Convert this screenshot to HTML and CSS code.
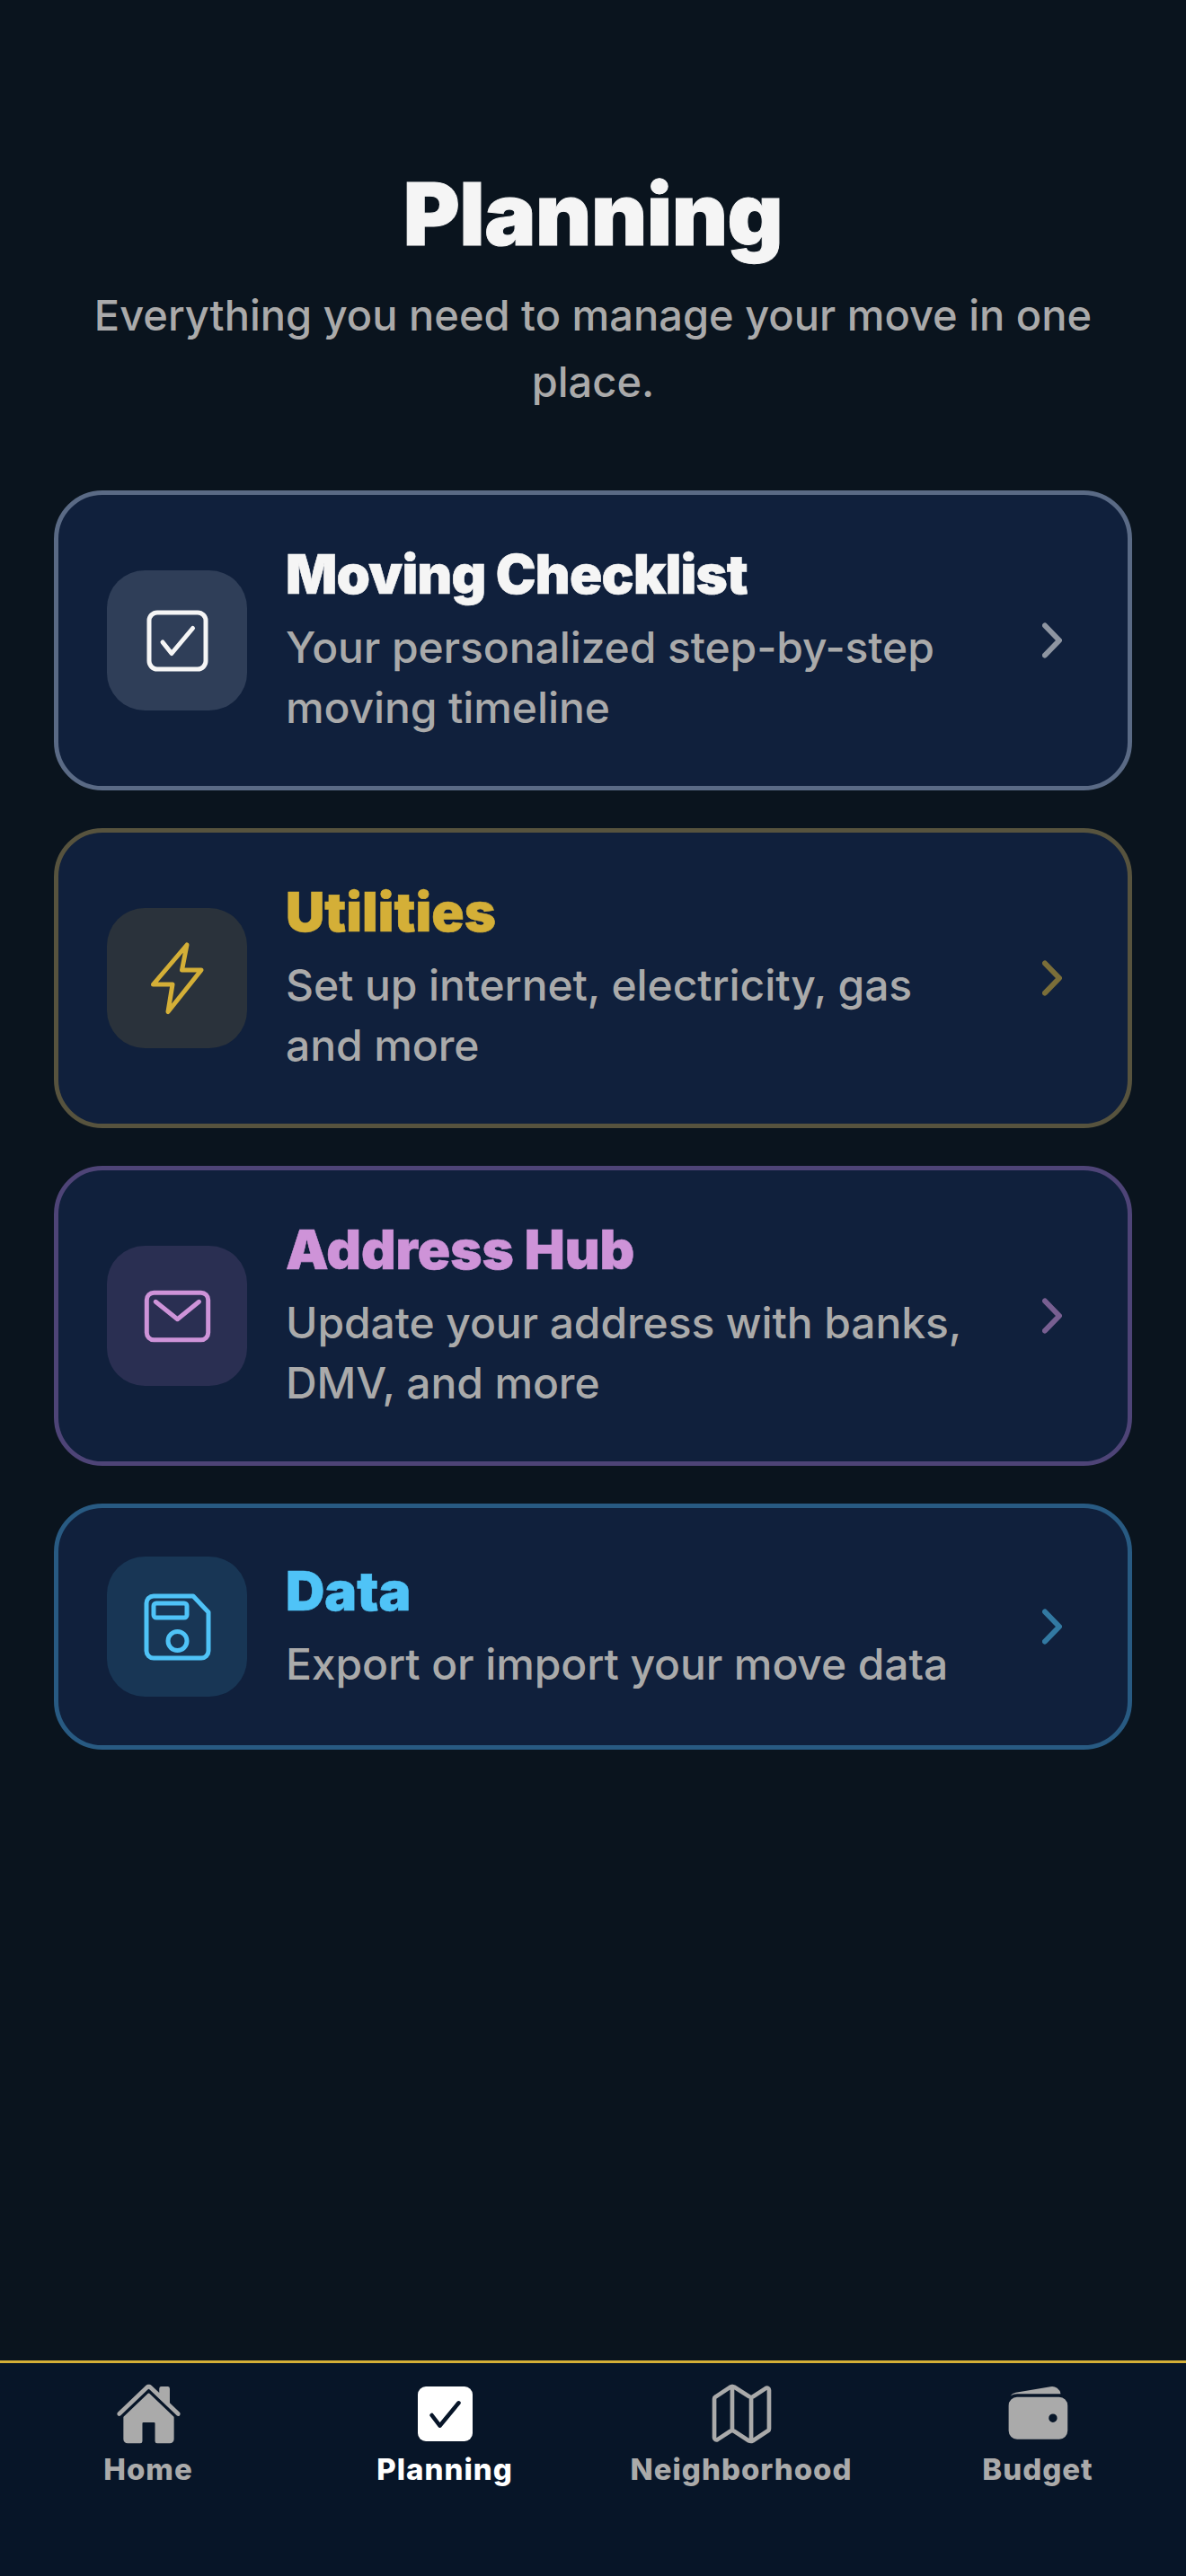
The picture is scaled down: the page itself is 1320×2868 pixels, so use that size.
FILE: index.html
```html
<!DOCTYPE html>
<html lang="en">
<head>
    <meta charset="UTF-8">
    <meta name="viewport" content="width=device-width, initial-scale=1.0">
    <title>Planning</title>
    <link rel="stylesheet" href="styles.css">
</head>
<body>
    <div class="screen">
        <main class="content">
            <h1>Planning</h1>
            <p class="intro">Everything you need to manage your move in one place.</p>

            <div class="cards">
                <div class="card card-checklist">
                    <div class="card-icon">
                        <svg viewBox="0 0 81 81"><rect x="9" y="9" width="63" height="63" rx="9"/><path d="M24 42l10 12.500 23.500-28"/></svg>
                    </div>
                    <div class="card-text">
                        <h2>Moving Checklist</h2>
                        <p>Your personalized step-by-step moving timeline</p>
                    </div>
                    <svg class="chevron" viewBox="0 0 60 60"><path d="M22 13.500L38 30 22 46.500"/></svg>
                </div>

                <div class="card card-utilities">
                    <div class="card-icon">
                        <svg viewBox="0 0 81 81"><path d="M51 3L45.500 31H67L30 77.500 35 47H13.500z"/></svg>
                    </div>
                    <div class="card-text">
                        <h2>Utilities</h2>
                        <p>Set up internet, electricity, gas and more</p>
                    </div>
                    <svg class="chevron" viewBox="0 0 60 60"><path d="M22 13.500L38 30 22 46.500"/></svg>
                </div>

                <div class="card card-address">
                    <div class="card-icon">
                        <svg viewBox="0 0 81 81"><rect x="6.300" y="14.200" width="68.400" height="52.600" rx="8"/><path d="M16.200 24.300L40.500 43.700 64.500 24.300"/></svg>
                    </div>
                    <div class="card-text">
                        <h2>Address Hub</h2>
                        <p>Update your address with banks, DMV, and more</p>
                    </div>
                    <svg class="chevron" viewBox="0 0 60 60"><path d="M22 13.500L38 30 22 46.500"/></svg>
                </div>

                <div class="card card-data">
                    <div class="card-icon">
                        <svg viewBox="0 0 81 81"><path d="M14 6H58L75 24V67a8 8 0 0 1-8 8H14a8 8 0 0 1-8-8V14a8 8 0 0 1 8-8z"/><rect x="14" y="14" width="37" height="16" rx="3"/><circle cx="40.500" cy="56" r="10.500"/></svg>
                    </div>
                    <div class="card-text">
                        <h2>Data</h2>
                        <p>Export or import your move data</p>
                    </div>
                    <svg class="chevron" viewBox="0 0 60 60"><path d="M22 13.500L38 30 22 46.500"/></svg>
                </div>
            </div>
        </main>

        <nav class="tabbar">
            <div class="tab">
                <svg class="tab-icon" viewBox="0 0 512 512" fill="currentColor"><path d="M261.560 101.280a8 8 0 00-11.060 0L66.400 277.150a8 8 0 00-2.470 5.790L63.900 448a32 32 0 0032 32H192a16 16 0 0016-16V328a8 8 0 018-8h80a8 8 0 018 8v136a16 16 0 0016 16h96.060a32 32 0 0032-32V282.940a8 8 0 00-2.470-5.790z"/><path d="M490.910 244.150l-74.800-71.560V64a16 16 0 00-16-16h-48a16 16 0 00-16 16v32l-57.920-55.380C272.770 35.140 264.710 32 256 32c-8.680 0-16.700 3.140-22.140 8.630l-212.700 203.500c-6.220 6-7 15.870-1.340 22.370A16 16 0 0043 267.560L250.500 69.280a8 8 0 0111.060 0l207.520 198.280a16 16 0 0022.590-.44c6.140-6.360 5.630-16.860-.76-22.970z"/></svg>
                <span>Home</span>
            </div>
            <div class="tab tab-active">
                <svg class="tab-icon" viewBox="0 0 75 75"><rect x="7" y="7" width="61" height="61" rx="9" fill="#fff"/><path d="M22.600 39l8.900 11.700 21-25.400" fill="none" stroke="#071528" stroke-width="4.500" stroke-linecap="round" stroke-linejoin="round"/></svg>
                <span>Planning</span>
            </div>
            <div class="tab">
                <svg class="tab-icon" viewBox="0 0 512 512" fill="none" stroke="currentColor" stroke-width="32" stroke-linecap="round" stroke-linejoin="round"><path d="M313.270 124.640L198.730 51.360a32 32 0 00-29.280.35L56.510 127.490A16 16 0 0048 141.630v295.800a16 16 0 0023.490 14.140l97.820-63.790a32 32 0 0129.500-.24l111.860 73a32 32 0 0029.270-.11l115.430-75.940a16 16 0 008.630-14.200V74.570a16 16 0 00-23.490-14.140l-98 63.860a32 32 0 01-29.240.35zM328 128v336M184 48v336"/></svg>
                <span>Neighborhood</span>
            </div>
            <div class="tab">
                <svg class="tab-icon" viewBox="0 0 512 512" fill="currentColor"><path d="M95.500 104h320a87.730 87.730 0 0111.180.71 66 66 0 00-77.510-55.560L86 94.080h-.3a66 66 0 00-41.070 26.130A87.570 87.570 0 0195.500 104zM415.500 128h-320a64.070 64.070 0 00-64 64v192a64.070 64.070 0 0064 64h320a64.070 64.070 0 0064-64V192a64.070 64.070 0 00-64-64zM368 320a32 32 0 1132-32 32 32 0 01-32 32z"/></svg>
                <span>Budget</span>
            </div>
        </nav>
    </div>
</body>
</html>
```

FILE: styles.css
```css
* {
    box-sizing: border-box;
}
body {
    margin: 0;
    background-color: #0a141e;
    font-family: Inter, "Liberation Sans", sans-serif;
}
.screen {
    display: flex;
    flex-direction: column;
    height: 2868px;
}
.content {
    flex: 1;
    padding: 180px 60px 0;
}
h1 {
    margin: 0;
    font-size: 96px;
    line-height: 116px;
    font-weight: 900;
    letter-spacing: -0.5px;
    -webkit-text-stroke: 1px #f5f5f5;
    text-align: center;
    color: #f5f5f5;
}
.intro {
    margin: 18px 0 0;
    font-size: 47px;
    line-height: 74px;
    font-weight: 500;
    text-align: center;
    color: #aaaaaa;
}
.cards {
    display: flex;
    flex-direction: column;
    gap: 42px;
    margin-top: 84px;
}
.card {
    display: flex;
    align-items: center;
    gap: 43px;
    padding: 54px;
    border: 5px solid;
    border-radius: 54px;
    background-color: #10203c;
}
.card-icon {
    display: flex;
    align-items: center;
    justify-content: center;
    flex-shrink: 0;
    width: 156px;
    height: 156px;
    border-radius: 42px;
}
.card-icon svg {
    width: 81px;
    height: 81px;
    fill: none;
    stroke: currentColor;
    stroke-width: 5;
    stroke-linecap: round;
    stroke-linejoin: round;
}
.card-text {
    flex: 1;
}
.card-text h2 {
    margin: 0 0 14px;
    font-size: 60px;
    line-height: 68px;
    font-weight: 900;
    -webkit-text-stroke: 0.6px currentColor;
}
.card-checklist h2 {
    letter-spacing: -0.8px;
}
.card-text p {
    margin: 0;
    font-size: 48px;
    line-height: 67px;
    font-weight: 500;
    letter-spacing: -0.1px;
    color: #aaaaaa;
}
.chevron {
    flex-shrink: 0;
    width: 60px;
    height: 60px;
    fill: none;
    stroke: currentColor;
    stroke-width: 6;
    stroke-linecap: round;
    stroke-linejoin: round;
    opacity: 0.55;
}
.card-checklist {
    border-color: #5a6a85;
    color: #f5f5f5;
}
.card-checklist .card-icon {
    background-color: #2f3e58;
}
.card-utilities {
    border-color: #57533e;
    color: #d4af37;
}
.card-utilities .card-icon {
    background-color: #2a323b;
}
.card-address {
    border-color: #4e4477;
    color: #ce93d8;
}
.card-address .card-icon {
    background-color: #2a2f52;
}
.card-data {
    border-color: #285a82;
    color: #4fc3f7;
}
.card-data .card-icon {
    background-color: #183655;
}
.tabbar {
    display: grid;
    grid-template-columns: repeat(4, 1fr);
    height: 240px;
    padding-top: 19px;
    border-top: 3px solid #d4af37;
    background-color: #071528;
}
.tab {
    display: flex;
    flex-direction: column;
    align-items: center;
    color: #aaaaaa;
}
.tab-icon {
    width: 75px;
    height: 75px;
}
.tab span {
    margin-top: 2px;
    font-size: 33px;
    line-height: 44px;
    font-weight: 800;
    letter-spacing: 1px;
}
.tab-active {
    color: #ffffff;
}
```
